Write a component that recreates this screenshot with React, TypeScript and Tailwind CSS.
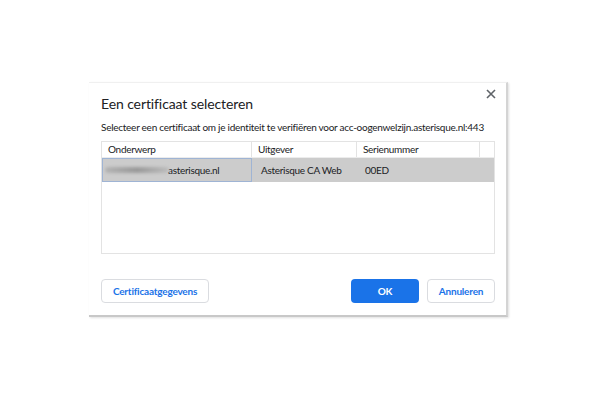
import React from "react";

const App = () => {
  return (
    <div className="w-[600px] h-[400px] bg-white relative font-['Lato',sans-serif]">
      <div className="absolute left-[89px] top-[82px] w-[419px] h-[235px] bg-white border-t border-t-[#f0f0f0] border-r-2 border-r-[#d4d4d4] border-b-2 border-b-[#c8c8c8] shadow-[1px_1px_2px_rgba(0,0,0,0.12)] flex flex-col">
        <div className="relative pl-[12px] pt-[12px]">
          <h1 className="text-[14px] tracking-[-0.1px] text-[#202124] leading-[18px]">Een certificaat selecteren</h1>
          <button className="absolute right-[10px] top-[6px] text-[#5f6368]">
            <svg width="10" height="10" viewBox="0 0 10 10">
              <path d="M1 1L9 9M9 1L1 9" stroke="#5f6368" strokeWidth="1.6" />
            </svg>
          </button>
          <p className="mt-[7px] text-[10px] tracking-[-0.26px] text-[#202124] leading-[14px] whitespace-nowrap">
            Selecteer een certificaat om je identiteit te verifiëren voor acc-oogenwelzijn.asterisque.nl:443
          </p>
        </div>
        <div className="ml-[12px] mr-[11px] mt-[7px] h-[113px] border border-[#e3e3e3] text-[10px] tracking-[-0.3px] text-[#202124]">
          <div className="flex h-[16px] items-center border-b border-[#ececec]">
            <div className="w-[150px] pl-[6px] border-r border-[#e3e3e3] h-full flex items-center">Onderwerp</div>
            <div className="w-[105px] pl-[6px] border-r border-[#e3e3e3] h-full flex items-center">Uitgever</div>
            <div className="w-[123px] pl-[6px] border-r border-[#e3e3e3] h-full flex items-center">Serienummer</div>
          </div>
          <div className="flex h-[24px] items-center bg-[#cccccc]">
            <div className="w-[150px] h-full border border-[#9fb4d4] flex items-center pl-[2px]">
              <span className="w-[64px] h-[6px] rounded-full bg-gradient-to-r from-[#b4b4b4] via-[#9a9a9a] to-[#bdbdbd] blur-[1.5px]"></span>
              <span className="-ml-[1px]">asterisque.nl</span>
            </div>
            <div className="w-[105px] pl-[9px]">Asterisque CA Web</div>
            <div className="pl-[8px]">00ED</div>
          </div>
        </div>
        <div className="flex items-center mt-[25px] pl-[12px] pr-[11px] text-[10px] tracking-[-0.2px] font-bold">
          <button className="h-[24px] w-[108px] border border-[#dadce0] rounded-[4px] text-[#1a73e8]">
            Certificaatgegevens
          </button>
          <div className="flex-1"></div>
          <button className="h-[24px] w-[68px] rounded-[4px] bg-[#1a73e8] text-white">OK</button>
          <button className="ml-[8px] h-[24px] w-[68px] border border-[#dadce0] rounded-[4px] text-[#1a73e8]">
            Annuleren
          </button>
        </div>
      </div>
    </div>
  );
};

export default App;
